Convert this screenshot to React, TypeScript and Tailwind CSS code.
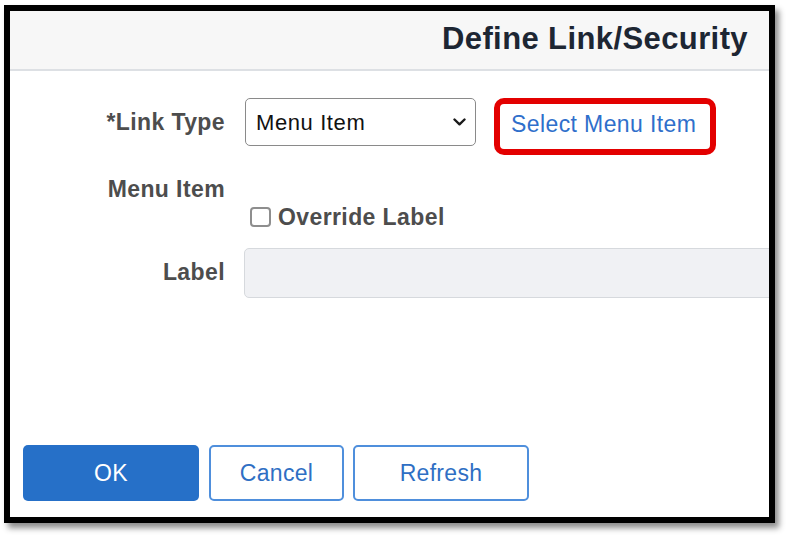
import React from 'react';

// Define Link/Security dialog (PeopleSoft fluid style)

const label = "text-[23px] font-bold tracking-[0.4px] text-[#4d4d4d] leading-[28px]";

function Chevron() {
  return (
    <svg width="13" height="8" viewBox="0 0 13 8" fill="none">
      <polyline points="1.5,1.5 6.5,6.3 11.5,1.5" stroke="#1a1a1a" strokeWidth="2.4" strokeLinecap="round" strokeLinejoin="round" />
    </svg>
  );
}

export default function App() {
  return (
    <div className="w-[789px] h-[536px] bg-white pt-[5px] pl-[4px] font-['Liberation_Sans',Arial,sans-serif]">
      <div className="w-[771px] h-[518px] border-[6px] border-black bg-white overflow-hidden flex flex-col shadow-[4px_5px_6px_rgba(0,0,0,0.45)]">
        {/* Header */}
        <div className="h-[60px] shrink-0 bg-[#f7f7f7] border-b-2 border-[#dde0e4] flex items-center justify-end pr-[21px] pb-[4px]">
          <h1 className="text-[31px] font-bold tracking-[0.4px] text-[#1d2633] leading-none">Define Link/Security</h1>
        </div>

        {/* Form */}
        <div className="flex-1 pt-[27px]">
          <div className="grid grid-cols-[215px_1fr] gap-x-[19px]">
            <div className="h-[48px] flex items-center justify-end">
              <span className={label}>*Link Type</span>
            </div>
            <div className="flex items-start h-[57px]">
              <div className="ml-[1px] w-[231px] h-[48px] border border-[#8a8a8a] rounded-[5px] bg-white flex items-center justify-between pl-[10px] pr-[9px]">
                <span className="text-[22px] tracking-[0.6px] text-[#111]">Menu Item</span>
                <Chevron />
              </div>
              <div className="ml-[18px] w-[222px] h-[57px] border-[6px] border-[#e30000] rounded-[10px] flex items-center pl-[11px] pb-[5px]">
                <span className="text-[23px] tracking-[0.4px] text-[#2f6fcb]">Select Menu Item</span>
              </div>
            </div>

            <div className="mt-[20px] flex justify-end">
              <span className={label}>Menu Item</span>
            </div>
            <div className="mt-[20px]" />

            <div />
            <div className="flex items-center h-[28px] pl-[6px] gap-[7px]">
              <span className="w-[21px] h-[20px] border-2 border-[#8e8e8e] rounded-[4px] bg-white" />
              <span className={label}>Override Label</span>
            </div>

            <div className="mt-[17px] h-[50px] flex items-center justify-end pb-[3px]">
              <span className={label}>Label</span>
            </div>
            <div className="mt-[17px] w-[540px] h-[50px] bg-[#f0f1f4] border border-[#d6d9dd] rounded-[5px]" />
          </div>
        </div>

        {/* Buttons */}
        <div className="flex gap-[10px] pl-[13px] pb-[16px]">
          <button className="w-[176px] h-[56px] rounded-[5px] bg-[#2670c8] text-white text-[23px] tracking-[0.3px]">OK</button>
          <button className="w-[135px] h-[56px] rounded-[5px] border-2 border-[#4f8fdc] bg-white text-[#2f6fc4] text-[23px] tracking-[0.3px]">Cancel</button>
          <button className="-ml-[1px] w-[176px] h-[56px] rounded-[5px] border-2 border-[#4f8fdc] bg-white text-[#2f6fc4] text-[23px] tracking-[0.3px]">Refresh</button>
        </div>
      </div>
    </div>
  );
}
